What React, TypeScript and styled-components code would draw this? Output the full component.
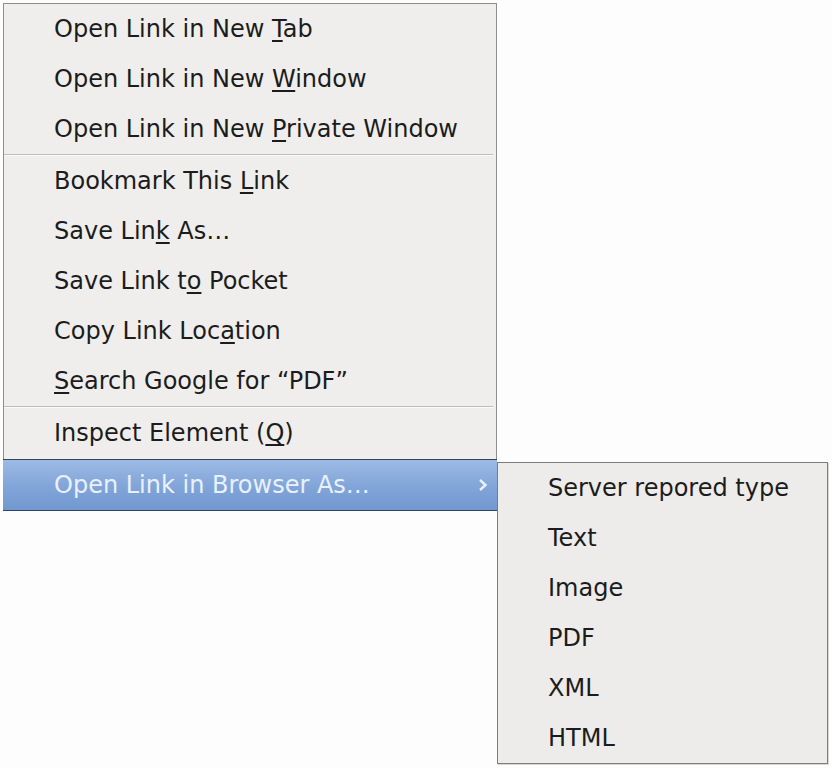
import React from 'react';
import styled, { createGlobalStyle } from 'styled-components';

const GlobalStyle = createGlobalStyle`
  html, body {
    margin: 0;
    padding: 0;
    background: #fdfdfd;
  }
  body {
    font-family: 'DejaVu Sans', 'Noto Sans', sans-serif;
  }
`;

const Page = styled.div`
  padding: 3px;
  width: 832px;
  height: 768px;
  box-sizing: border-box;
`;

const Menu = styled.div`
  position: relative;
  width: 494px;
  box-sizing: border-box;
  background: #efeeec;
  border: 1px solid #8e8e8e;
  display: flex;
  flex-direction: column;
`;

const SubMenu = styled.div`
  position: absolute;
  left: 493px;
  top: 458px;
  width: 331px;
  box-sizing: border-box;
  background: #edecea;
  border: 1px solid #7c7c7c;
  box-shadow: 1px 1px 0 #d8d8d8;
  display: flex;
  flex-direction: column;
`;

const Item = styled.div<{ $active?: boolean }>`
  height: 50px;
  box-sizing: border-box;
  display: flex;
  align-items: center;
  justify-content: space-between;
  padding: 0 14px 0 50px;
  font-size: 24px;
  color: ${(p) => (p.$active ? '#e9f1fc' : '#1c1c1c')};
  white-space: nowrap;
  ${(p) =>
    p.$active &&
    `
    height: 52px;
    background: linear-gradient(to bottom, #9cbae4 0%, #83a6d9 50%, #7198d0 100%);
    border-top: 1px solid #33445f;
    border-bottom: 1px solid #33445f;
    margin: 1px -1px -1px -1px;
    padding-left: 51px;
    padding-right: 9px;
  `}
`;

const Separator = styled.div`
  height: 1px;
  margin: 0 3px 0 0;
  background: #bdbdbb;
  border-bottom: 1px solid #fbfbfa;
`;

const Key = styled.span`
  text-decoration: underline;
  text-decoration-thickness: 2px;
  text-underline-offset: 3px;
`;

const Chevron = () => (
  <svg width="10" height="14" viewBox="0 0 10 14">
    <path d="M2 2 L7.5 7 L2 12" fill="none" stroke="#eaf1fb" strokeWidth="2.4" />
  </svg>
);

const subItems = ['Server repored type', 'Text', 'Image', 'PDF', 'XML', 'HTML'];

export default function App() {
  return (
    <>
      <GlobalStyle />
      <Page>
        <Menu>
          <Item>
            <span>
              Open Link in New <Key>T</Key>ab
            </span>
          </Item>
          <Item>
            <span>
              Open Link in New <Key>W</Key>indow
            </span>
          </Item>
          <Item>
            <span>
              Open Link in New <Key>P</Key>rivate Window
            </span>
          </Item>
          <Separator />
          <Item>
            <span>
              Bookmark This <Key>L</Key>ink
            </span>
          </Item>
          <Item>
            <span>
              Save Lin<Key>k</Key> As…
            </span>
          </Item>
          <Item>
            <span>
              Save Link t<Key>o</Key> Pocket
            </span>
          </Item>
          <Item>
            <span>
              Copy Link Loc<Key>a</Key>tion
            </span>
          </Item>
          <Item>
            <span>
              <Key>S</Key>earch Google for “PDF”
            </span>
          </Item>
          <Separator />
          <Item>
            <span>
              Inspect Element (<Key>Q</Key>)
            </span>
          </Item>
          <Item $active>
            <span>Open Link in Browser As…</span>
            <Chevron />
          </Item>
          <SubMenu>
            {subItems.map((s) => (
              <Item key={s}>
                <span>{s}</span>
              </Item>
            ))}
          </SubMenu>
        </Menu>
      </Page>
    </>
  );
}
